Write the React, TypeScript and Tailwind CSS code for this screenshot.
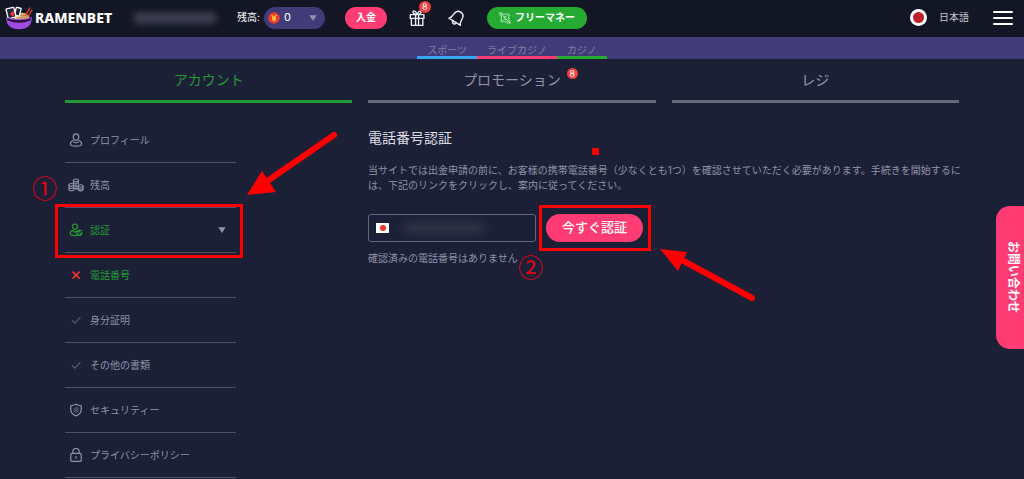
import type { ReactNode } from "react";

interface MenuItem {
  label: string;
  icon: ReactNode;
  active?: boolean;
  expandable?: boolean;
}

function Logo() {
  return (
    <svg viewBox="0 0 84 72" className="h-6 w-7 shrink-0" aria-hidden="true">
      <path d="M4 38 Q6 28 24 26 L62 24 Q80 28 80 38 Z" fill="#3b2150" />
      <path d="M26 42 Q30 22 52 20 Q70 20 74 40 Z" fill="#e5b878" />
      <g fill="none" stroke="#8a5a3a" strokeWidth="2">
        <path d="M38 40 Q42 27 53 27 Q64 27 67 38" />
        <path d="M46 40 Q48 33 54 33 Q59 33 60 39" />
      </g>
      <rect x="31" y="5" width="15" height="24" rx="2" fill="#22243a" stroke="#fff" strokeWidth="4" transform="rotate(14 38 17)" />
      <rect x="6" y="6" width="24" height="30" rx="2" fill="#22243a" stroke="#fff" strokeWidth="4" transform="rotate(-14 18 21)" />
      <path d="M22 15 l7 8 -5 9 -9 -7z" fill="#f23b2e" />
      <path d="M62 28 L74 6 M70 30 L81 12" stroke="#f23b2e" strokeWidth="4" strokeLinecap="round" />
      <path d="M3 34 Q42 46 81 34 Q80 70 42 70 Q4 70 3 34Z" fill="#a24be0" />
      <path d="M6 37 Q42 49 78 37 L77 43 Q42 58 7 43Z" fill="#25123f" />
    </svg>
  );
}

function GiftIcon() {
  return (
    <svg viewBox="0 0 20 20" className="size-5" fill="none" stroke="#eceef5" strokeWidth="1.4" strokeLinejoin="round" strokeLinecap="round" aria-hidden="true">
      <path d="M3.300 6.600h13.600v3.800H3.300zM4.400 10.400h11.400v7H4.400zM8.600 6.600v10.800M11.600 6.600v10.800" />
      <path d="M10.100 6.400C8.800 3 6.800 2.400 6.200 3.400c-.7 1.200.6 3 3.900 3 3.300 0 4.600-1.800 3.900-3-.6-1-2.600-.4-3.900 3" />
    </svg>
  );
}

function BellIcon() {
  return (
    <svg viewBox="0 0 20 20" className="size-5" fill="none" stroke="#eceef5" strokeWidth="1.400" strokeLinejoin="round" strokeLinecap="round" aria-hidden="true">
      <g transform="rotate(32 10 10)">
        <path d="M3.200 14.400c1.700-1.400 1.900-3 1.900-5.600C5.100 5.200 7.200 3 10 3s4.900 2.200 4.900 5.800c0 2.600.2 4.200 1.900 5.600z" />
        <path d="M8 14.600a2 2 0 0 0 4 0" />
      </g>
    </svg>
  );
}

function FreeMoneyIcon() {
  return (
    <svg viewBox="0 0 12 12" className="size-3 shrink-0" fill="none" stroke="#b9e8bd" strokeWidth="0.9" strokeLinecap="round" aria-hidden="true">
      <circle cx="6" cy="6" r="3.900" />
      <path d="M1 1l10 10M1 1v2.800M1 1h2.800M11 11H8.200M11 11V8.200M1.500 8.500l1.500 2M9.200 1.500l1.500 2" />
      <path d="M7.200 4.600H5.400v1.400h1.400v1.400H4.900" />
    </svg>
  );
}

function UserIcon() {
  return (
    <svg viewBox="0 0 14 14" className="size-[14px]" fill="none" stroke="currentColor" strokeWidth="1.200" strokeLinejoin="round" aria-hidden="true">
      <ellipse cx="7" cy="4" rx="2.800" ry="3.200" />
      <path d="M4.600 7.300C2.600 8 1.400 9.200 1.400 11c0 1.600 2 2.200 5.600 2.200s5.600-.6 5.600-2.200c0-1.800-1.200-3-3.200-3.700M4.400 8.600c1.400 1.200 3.800 1.200 5.200 0" />
    </svg>
  );
}

function CoinsIcon() {
  return (
    <svg viewBox="0 0 16 14" className="h-[14px] w-4" fill="none" stroke="currentColor" strokeWidth="1.100" aria-hidden="true">
      <path d="M5.400 6V2.400M10.400 6.500V2.400M5.400 4.200c0 1.400 5 1.400 5 0" />
      <ellipse cx="7.900" cy="2.400" rx="2.500" ry="1.400" />
      <ellipse cx="3.400" cy="6.800" rx="2.500" ry="1.300" />
      <path d="M.9 6.800v4.600c0 1.700 5 1.700 5 0V6.800M.9 9.100c0 1.700 5 1.700 5 0M5.900 8h4.200M5.900 10.500h4.200M8 5.500V12" />
      <ellipse cx="12.600" cy="8" rx="2.500" ry="1.300" />
      <path d="M10.100 8v3.600c0 1.700 5 1.700 5 0V8M10.100 9.900c0 1.700 5 1.700 5 0" />
    </svg>
  );
}

function VerifyIcon() {
  return (
    <svg viewBox="0 0 14 14" className="size-[14px]" fill="none" stroke="currentColor" strokeWidth="1.200" strokeLinecap="round" strokeLinejoin="round" aria-hidden="true">
      <circle cx="6" cy="3.600" r="2.600" />
      <path d="M4 7.400C2.200 7.800 1.200 9 1.200 10.600c0 1.500 1.400 2 5 2H8M4.400 8.200c1 .8 2.600.8 3.600 0" />
      <circle cx="10.300" cy="9.700" r="3.200" fill="currentColor" stroke="none" />
      <path d="M8.700 9.700l1.200 1.200 2.200-2.400" stroke="#1c2037" />
    </svg>
  );
}

function CrossIcon() {
  return (
    <svg viewBox="0 0 14 14" className="size-[14px]" stroke="#f0362f" strokeWidth="1.600" aria-hidden="true">
      <path d="M3.600 3.600l7 7M10.600 3.600l-7 7" />
    </svg>
  );
}

function CheckIcon() {
  return (
    <svg viewBox="0 0 14 14" className="size-[14px]" fill="none" stroke="#595d70" strokeWidth="1.200" aria-hidden="true">
      <path d="M2.800 7.200l3 3 5.600-6" />
    </svg>
  );
}

function ShieldIcon() {
  return (
    <svg viewBox="0 0 14 14" className="size-[14px]" fill="none" stroke="currentColor" strokeWidth="1.200" strokeLinejoin="round" strokeLinecap="round" aria-hidden="true">
      <path d="M7 1.200c1.800 1 3.400 1.300 5.200 1.300v4.200c0 3-2 5-5.200 6.200-3.200-1.200-5.200-3.200-5.200-6.200V2.500C3.600 2.500 5.200 2.200 7 1.200z" />
      <path d="M4.800 6.800l2.800-2.400M5.400 8.800l3.800-3.400M7.200 9.200l2-1.700" strokeWidth="0.900" />
    </svg>
  );
}

function LockIcon() {
  return (
    <svg viewBox="0 0 14 14" className="size-[14px]" fill="none" stroke="currentColor" strokeWidth="1.200" strokeLinecap="round" aria-hidden="true">
      <rect x="1.800" y="5.400" width="10.400" height="8" rx="1" />
      <path d="M3.900 5.200V3.600a3.100 3.100 0 0 1 6.200 0v1.600M7 8.600v1.600" />
    </svg>
  );
}

function Caret() {
  return (
    <svg viewBox="0 0 8 6" className="h-[6px] w-2 shrink-0" aria-hidden="true">
      <path d="M0.300 0.300h7.400L4 6z" fill="#9194a8" />
    </svg>
  );
}

const menu: MenuItem[] = [
  { label: "プロフィール", icon: <UserIcon /> },
  { label: "残高", icon: <CoinsIcon /> },
  { label: "認証", icon: <VerifyIcon />, active: true, expandable: true },
  { label: "電話番号", icon: <CrossIcon />, active: true },
  { label: "身分証明", icon: <CheckIcon /> },
  { label: "その他の書類", icon: <CheckIcon /> },
  { label: "セキュリティー", icon: <ShieldIcon /> },
  { label: "プライバシーポリシー", icon: <LockIcon /> },
];

function Header() {
  return (
    <header className="flex h-[37px] items-center gap-5 bg-[#131625] pb-[2px] pl-[5px] pr-[11px] text-white">
      <a href="#" className="flex w-[108px] shrink-0 items-center gap-[2px]">
        <Logo />
        <span className="font-['Noto_Sans'] text-[14px] font-extrabold leading-none">RAMENBET</span>
      </a>
      <div className="h-3 w-[84px] shrink-0 rounded-md bg-[#3b3e50] blur-[3px]" />
      <div className="flex shrink-0 items-center gap-1">
        <label htmlFor="balance" className="text-[10px]">残高:</label>
        <div className="flex h-[22px] w-[61px] items-center rounded-full bg-[#423b7a] pl-1 pr-2">
          <svg viewBox="0 0 12 12" className="size-3 shrink-0" aria-hidden="true">
            <circle cx="6" cy="6" r="5.800" fill="#f0382b" />
            <path d="M3.600 2.800L6 5.800l2.400-3M6 5.800v3.700M4 6.200h4M4 7.800h4" fill="none" stroke="#ffd23c" strokeWidth="1.200" />
          </svg>
          <select id="balance" className="min-w-0 flex-1 appearance-none bg-transparent pl-1 text-[11px] text-white outline-none">
            <option>0</option>
          </select>
          <Caret />
        </div>
      </div>
      <button type="button" className="h-[22px] w-[42px] shrink-0 rounded-full bg-[#ff3b73] text-[10px] font-bold">
        入金
      </button>
      <button type="button" aria-label="ギフト" className="relative shrink-0">
        <GiftIcon />
        <span className="absolute -top-[7px] left-[12px] flex size-3 items-center justify-center rounded-full bg-[#f4403c] text-[9px] leading-none">8</span>
      </button>
      <button type="button" aria-label="通知" className="shrink-0">
        <BellIcon />
      </button>
      <button type="button" className="flex h-[22px] w-[100px] shrink-0 items-center justify-center gap-1 rounded-full bg-[#25ab32] text-[10px] font-bold">
        <FreeMoneyIcon />
        フリーマネー
      </button>
      <div className="ml-auto flex shrink-0 items-center gap-6">
        <button type="button" className="flex items-center gap-3 text-[10px] text-[#c6c8d4]">
          <span className="flex size-[17px] items-center justify-center rounded-full bg-white">
            <span className="size-[11px] rounded-full bg-[#bd2029]" />
          </span>
          日本語
        </button>
        <button type="button" aria-label="メニュー" className="flex w-5 flex-col gap-1">
          <span className="h-[2px] rounded-full bg-white" />
          <span className="h-[2px] rounded-full bg-white" />
          <span className="h-[2px] rounded-full bg-white" />
        </button>
      </div>
    </header>
  );
}

function GameNav() {
  return (
    <nav className="flex h-[22px] items-end justify-center bg-[#423b7a] text-[10px] leading-[12px] text-[#827da2]">
      <a href="#" className="border-b-[3px] border-[#36a6f2] px-[10px]">スポーツ</a>
      <a href="#" className="border-b-[3px] border-[#ff3b73] px-[10px]">ライブカジノ</a>
      <a href="#" className="border-b-[3px] border-[#25ab32] px-[10px]">カジノ</a>
    </nav>
  );
}

function Tabs() {
  return (
    <nav className="grid grid-cols-3 gap-4 px-[65px] text-center text-[14px] leading-[41px] text-[#9194a6]">
      <a href="#" className="border-b-[3px] border-[#229a34] text-[#229a34]">アカウント</a>
      <a href="#" className="border-b-[3px] border-[#656879]">
        <span className="relative">
          プロモーション
          <span className="absolute -right-[17px] -top-[3px] flex size-[11px] items-center justify-center rounded-full bg-[#f4403c] text-[9px] leading-none text-white">8</span>
        </span>
      </a>
      <a href="#" className="border-b-[3px] border-[#656879]">レジ</a>
    </nav>
  );
}

function SideMenu() {
  return (
    <ul className="w-[171px] shrink-0 text-[10px] text-[#8f92a5]">
      {menu.map((item) => {
        const content = (
          <>
            <span className="flex w-[22px] justify-center">{item.icon}</span>
            <span>{item.label}</span>
            {item.expandable && (
              <span className="ml-auto">
                <Caret />
              </span>
            )}
          </>
        );
        const row = "flex h-11 w-full items-center gap-[3px] pr-[10px] text-left";
        return (
          <li key={item.label} className={item.active ? "border-b border-[#4e5164] text-[#229a34]" : "border-b border-[#4e5164]"}>
            {item.expandable ? (
              <button type="button" aria-expanded="true" className={row}>{content}</button>
            ) : (
              <a href="#" className={row}>{content}</a>
            )}
          </li>
        );
      })}
    </ul>
  );
}

function PhoneVerification() {
  return (
    <main className="min-w-0 flex-1 pt-[10px] text-[10px] text-[#8f92a5]">
      <h1 className="text-[14px] leading-5 text-[#dcdde5]">電話番号認証</h1>
      <p className="mt-[15px] leading-[15px]">
        当サイトでは出金申請の前に、お客様の携帯電話番号（少なくとも1つ）を確認させていただく必要があります。手続きを開始するには、下記のリンクをクリックし、案内に従ってください。
      </p>
      <form className="mt-[21px] flex items-center gap-[10px]" onSubmit={(e) => e.preventDefault()}>
        <div className="relative flex h-7 w-[168px] items-center rounded-[3px] border border-[#656879] pl-[7px]">
          <span className="flex h-[10px] w-[13px] shrink-0 items-center justify-center bg-white">
            <span className="size-[6px] rounded-full bg-[#f0362f]" />
          </span>
          <input type="tel" aria-label="電話番号" className="h-full min-w-0 flex-1 bg-transparent px-3 outline-none" />
          <span className="pointer-events-none absolute left-[34px] top-[7px] h-3 w-[82px] rounded-md bg-[#303346] blur-[4px]" />
        </div>
        <button type="submit" className="h-7 w-[97px] rounded-full bg-[#ff3b73] text-[13px] font-medium text-white">
          今すぐ認証
        </button>
      </form>
      <p className="mt-[9px] leading-[15px]">確認済みの電話番号はありません</p>
    </main>
  );
}

// Tutorial markers drawn on top of the page
function Annotations() {
  return (
    <div className="pointer-events-none absolute inset-0 font-['Noto_Sans_CJK_JP',sans-serif] text-[25px] leading-none text-[#e60012]">
      <div className="absolute left-[55px] top-[204px] h-[54px] w-[188px] border-[3px] border-[#ff0000]" />
      <div className="absolute left-[539px] top-[205px] h-[46px] w-[112px] border-[3px] border-[#ff0000]" />
      <div className="absolute left-[592px] top-[148px] size-[7px] rounded-[1px] bg-[#ff0000]" />
      <span className="absolute left-[32px] top-[175px]">①</span>
      <span className="absolute left-[518px] top-[254px]">②</span>
      <svg viewBox="0 0 760 310" className="absolute left-0 top-0 h-[310px] w-[760px]" fill="#ff0000" stroke="#ff0000" aria-hidden="true">
        <path d="M334 135L266 182M752 298L680 259" strokeWidth="6" strokeLinecap="round" />
        <path d="M247 195L262 171L276 192zM660 249L687 252L678 271z" stroke="none" />
      </svg>
    </div>
  );
}

export default function App() {
  return (
    <div className="relative min-h-screen overflow-hidden bg-[#1c2037] font-['Inter','Noto_Sans_CJK_JP',sans-serif]">
      <Header />
      <GameNav />
      <Tabs />
      <div className="flex gap-[132px] pl-[65px] pr-14 pt-[15px]">
        <SideMenu />
        <PhoneVerification />
      </div>
      <button
        type="button"
        className="absolute right-0 top-[206px] flex h-[143px] w-7 items-center justify-center rounded-l-[14px] bg-[#ff3b73] pl-[6px] text-[12px] font-bold text-white [text-orientation:sideways] [writing-mode:vertical-rl]"
      >
        お問い合わせ
      </button>
      <Annotations />
    </div>
  );
}
